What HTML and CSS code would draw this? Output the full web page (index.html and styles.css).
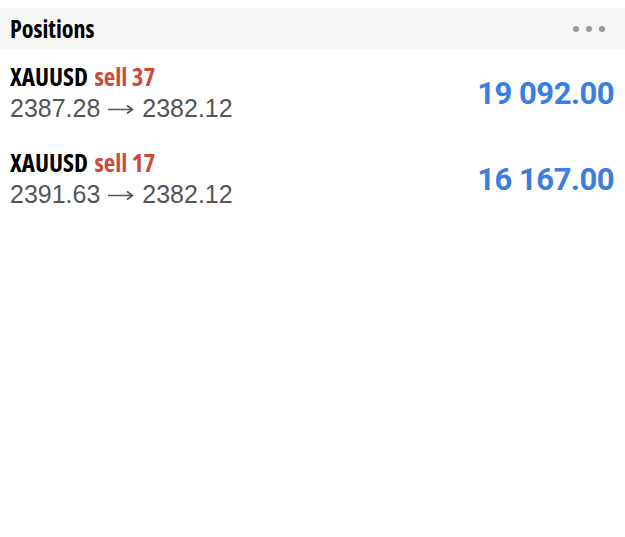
FILE: index.html
```html
<!DOCTYPE html>
<html lang="en">
<head>
  <meta charset="UTF-8">
  <meta name="viewport" content="width=device-width, initial-scale=1.0">
  <title>Positions</title>
  <link rel="stylesheet" href="styles.css">
</head>
<body>
  <div class="panel">
    <div class="panel-header">
      <span class="panel-title">Positions</span>
      <span class="more-dots"><i></i><i></i><i></i></span>
    </div>

    <div class="position-row">
      <div class="position-info">
        <div class="position-title">XAUUSD <span class="side-sell">sell 37</span></div>
        <div class="position-prices">2387.28 <svg class="arrow" viewBox="0 0 26 12"><path d="M0 6.5H24M19 2.5L24.5 6.5L19 10.5"/></svg> 2382.12</div>
      </div>
      <div class="position-profit">19 092.00</div>
    </div>

    <div class="position-row">
      <div class="position-info">
        <div class="position-title">XAUUSD <span class="side-sell">sell 17</span></div>
        <div class="position-prices">2391.63 <svg class="arrow" viewBox="0 0 26 12"><path d="M0 6.5H24M19 2.5L24.5 6.5L19 10.5"/></svg> 2382.12</div>
      </div>
      <div class="position-profit">16 167.00</div>
    </div>
  </div>
</body>
</html>
```

FILE: styles.css
```css
body {
  margin: 0;
  padding-top: 8px;
  background: #fff;
  font-family: "Liberation Sans", Arial, sans-serif;
  color: #111;
}
.panel-header {
  display: flex;
  align-items: center;
  justify-content: space-between;
  height: 41px;
  padding: 0 20px 0 10px;
  background-color: #f6f6f6;
}
.panel-title {
  font-family: "Open Sans", sans-serif;
  font-stretch: 78%;
  font-weight: 700;
  font-size: 24px;
  color: #000;
}
.more-dots {
  display: flex;
  gap: 7px;
}
.more-dots i {
  display: block;
  width: 6px;
  height: 6px;
  border-radius: 50%;
  background-color: #9a9a9a;
}
.position-row {
  display: flex;
  align-items: center;
  justify-content: space-between;
  height: 86px;
  padding: 2px 11px 0 10px;
  box-sizing: border-box;
}
.position-title {
  font-family: "Open Sans", sans-serif;
  font-stretch: 82%;
  font-weight: 700;
  font-size: 25px;
  line-height: 30px;
  color: #000;
}
.side-sell {
  margin-left: 2px;
  color: #cc4a3c;
}
.position-prices {
  font-size: 25px;
  line-height: 34px;
  color: #555;
}
.arrow {
  width: 26px;
  height: 12px;
  margin: 0 1px;
  vertical-align: 2px;
  fill: none;
  stroke: #555;
  stroke-width: 1.6;
}
.position-profit {
  font-family: Roboto, sans-serif;
  font-weight: bold;
  font-size: 31px;
  letter-spacing: -0.5px;
  color: #3a7ee0;
}
```
